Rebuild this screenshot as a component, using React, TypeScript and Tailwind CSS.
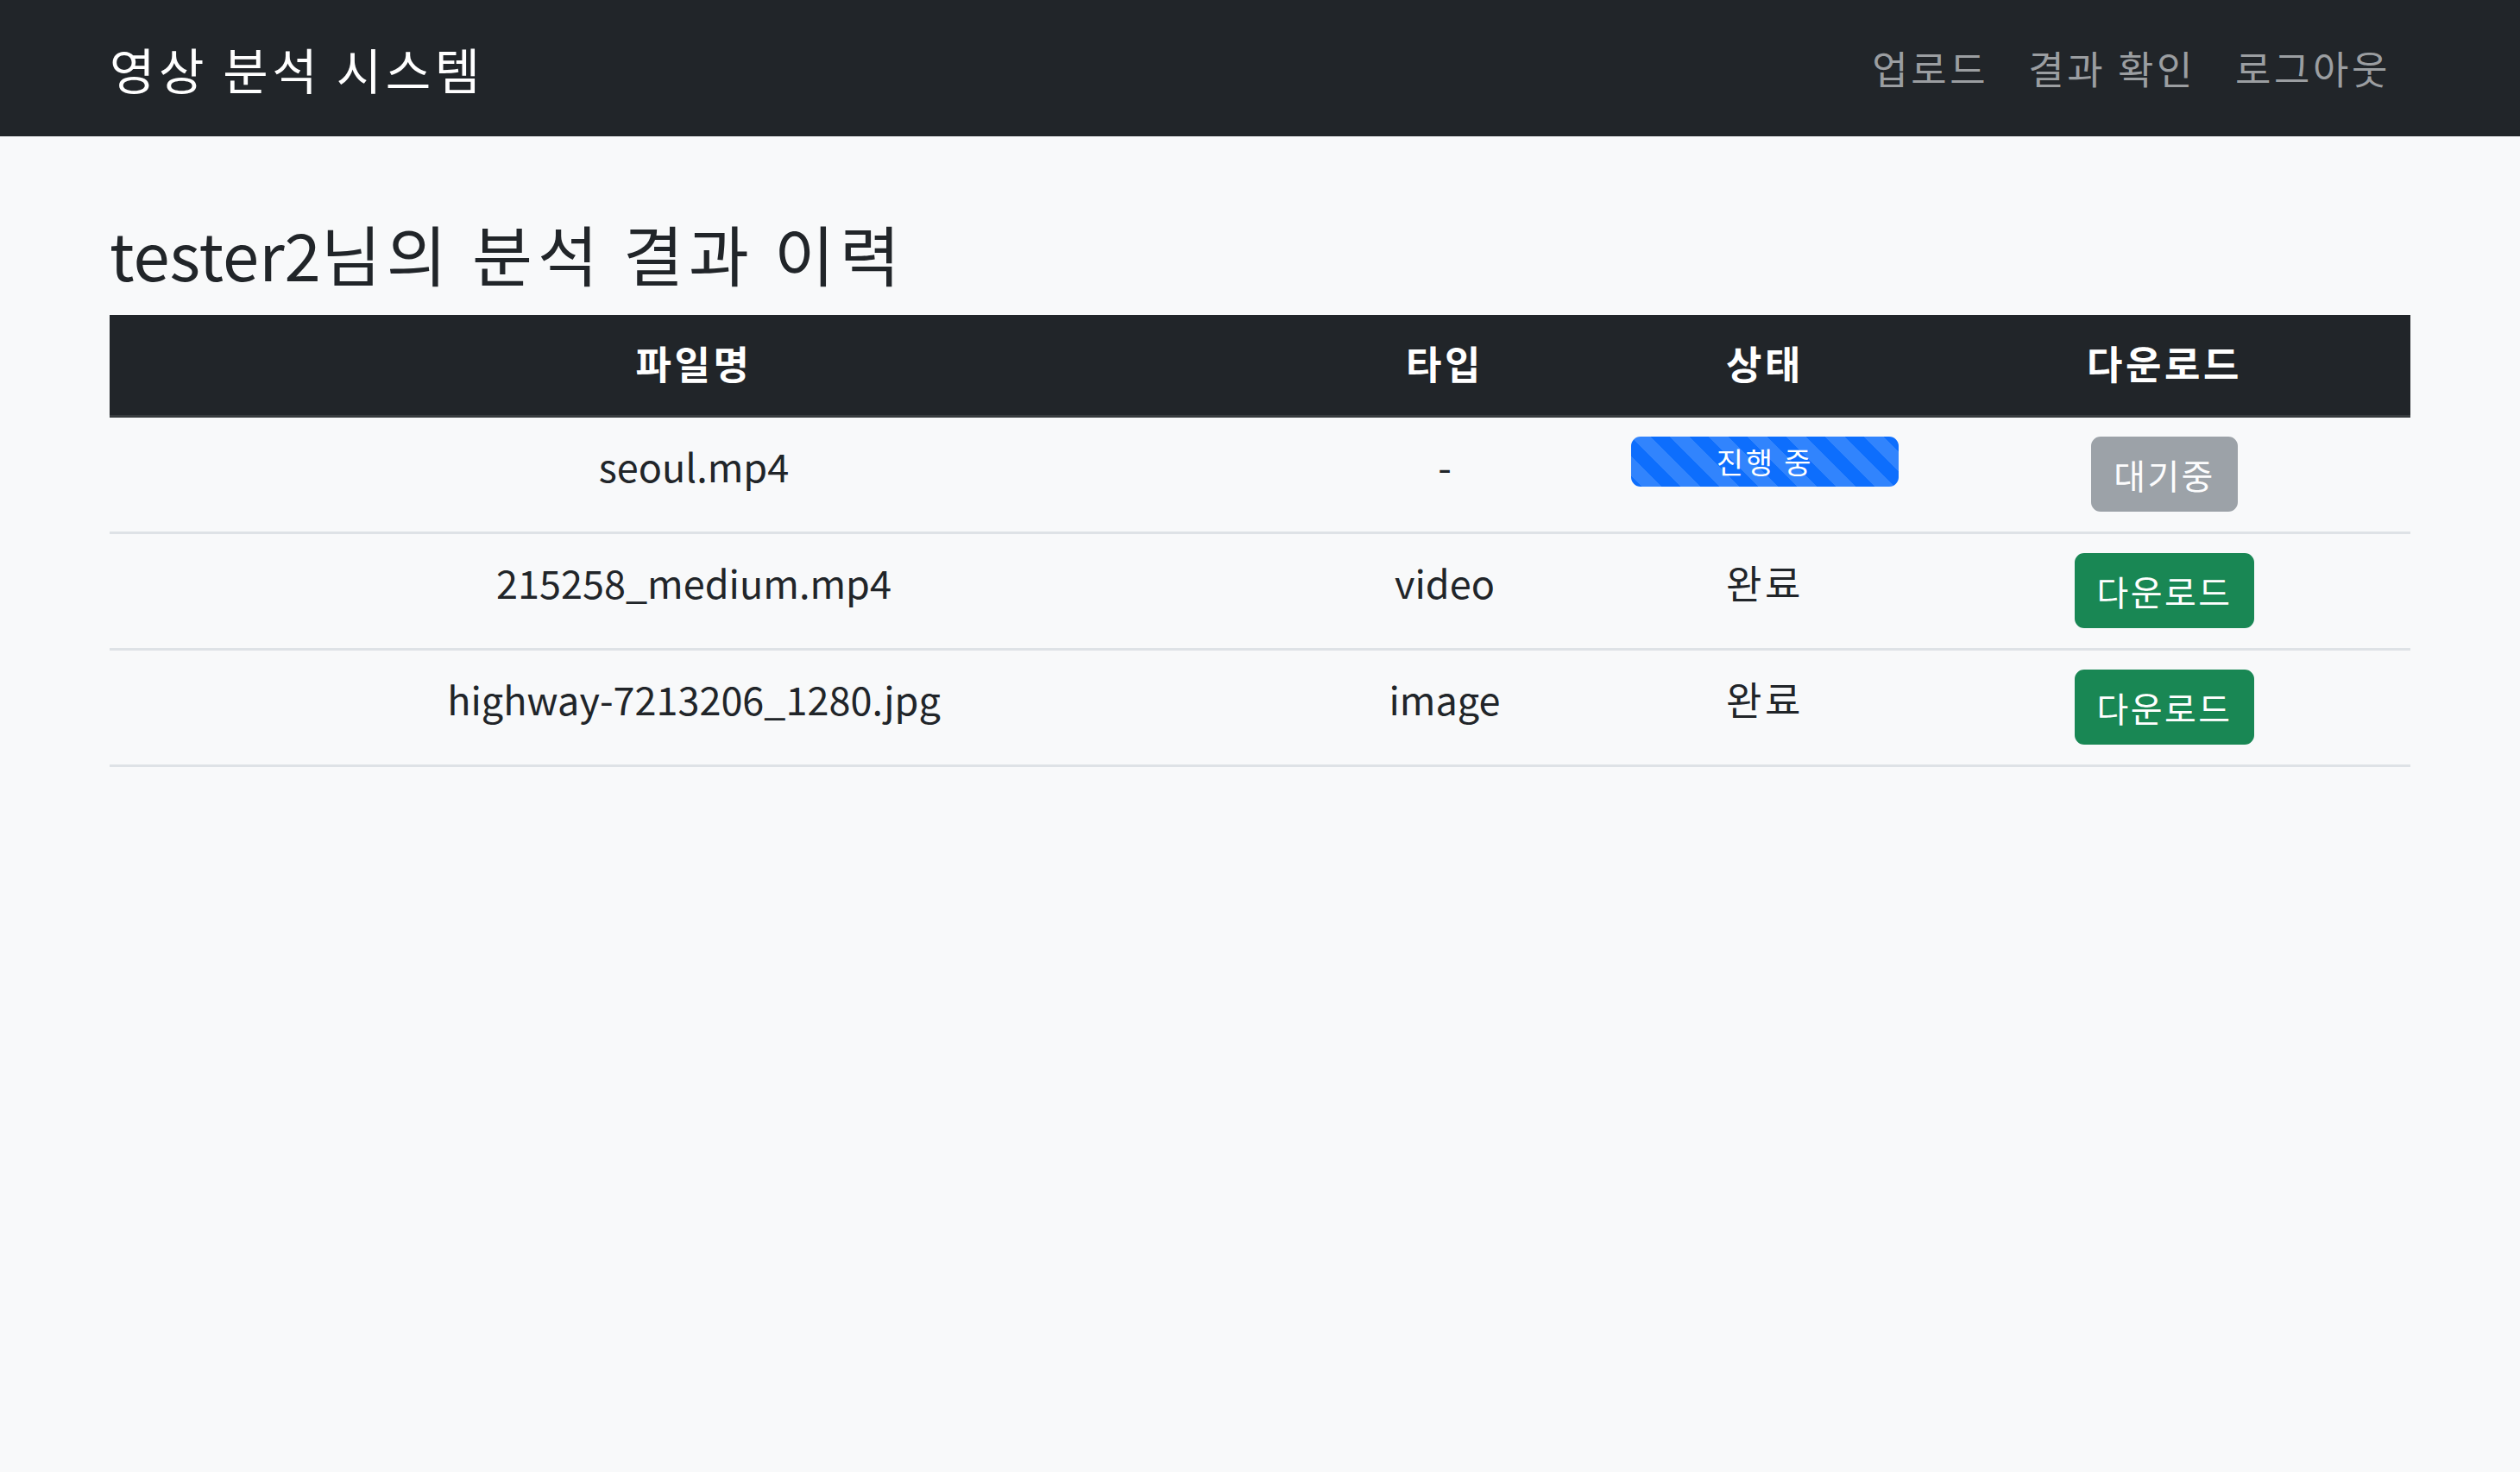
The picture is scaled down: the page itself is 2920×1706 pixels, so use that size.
import type { ReactNode } from "react";

type Row = {
  name: string;
  type: string;
  status: "running" | "done";
};

const rows: Row[] = [
  { name: "seoul.mp4", type: "-", status: "running" },
  { name: "215258_medium.mp4", type: "video", status: "done" },
  { name: "highway-7213206_1280.jpg", type: "image", status: "done" },
];

function NavLink({ children }: { children: ReactNode }) {
  return (
    <a href="#" className="px-[23px] text-[45px] leading-[68px] tracking-[0.08em] text-[#9b9ea1]">
      {children}
    </a>
  );
}

function Th({ children }: { children: ReactNode }) {
  return (
    <th className="border-b-[3px] border-[#373b3e] px-[23px] pt-[22px] pb-[26px] text-center text-[45px] font-bold leading-[68px] tracking-[0.08em] text-white">
      {children}
    </th>
  );
}

function Td({ children }: { children: ReactNode }) {
  return (
    <td className="border-b-[3px] border-[#dee2e6] px-[23px] pt-[22px] pb-[23px] text-center align-top text-[45px] leading-[68px] text-[#212529]">
      {children}
    </td>
  );
}

// 진행 중 상태 — bootstrap의 striped progress bar 흉내
function Progress() {
  return (
    <div className="h-[58px] w-full overflow-hidden rounded-[11px] bg-[#e9ecef]">
      <div className="flex h-full w-full items-center justify-center bg-[#0d6efd] bg-[linear-gradient(45deg,rgba(255,255,255,.15)_25%,transparent_25%,transparent_50%,rgba(255,255,255,.15)_50%,rgba(255,255,255,.15)_75%,transparent_75%,transparent)] bg-size-[45px_45px] text-[34px] leading-[58px] tracking-[0.08em] text-white">
        진행 중
      </div>
    </div>
  );
}

export default function App() {
  return (
    <div className="min-h-screen bg-[#f8f9fa] font-['Noto_Sans_CJK_KR','Noto_Sans',sans-serif] text-[#212529]">
      <nav className="flex h-[158px] items-center bg-[#212529]">
        <div className="mx-auto flex w-[2666px] items-center justify-between">
          <a href="#" className="text-[57px] leading-[85px] tracking-[0.08em] text-white">
            영상 분석 시스템
          </a>
          <div className="flex items-center">
            <NavLink>업로드</NavLink>
            <NavLink>결과 확인</NavLink>
            <NavLink>로그아웃</NavLink>
          </div>
        </div>
      </nav>

      <main className="mx-auto w-[2666px] pt-[89px]">
        <h3 className="mb-[26px] text-[76px] leading-[92px] font-normal">
          tester2<span className="tracking-[0.08em]">님의 분석 결과 이력</span>
        </h3>
        <table className="w-full table-fixed border-collapse">
          <colgroup>
            <col className="w-[1354px]" />
            <col className="w-[386px]" />
            <col className="w-[356px]" />
            <col className="w-[570px]" />
          </colgroup>
          <thead className="bg-[#212529]">
            <tr>
              <Th>파일명</Th>
              <Th>타입</Th>
              <Th>상태</Th>
              <Th>다운로드</Th>
            </tr>
          </thead>
          <tbody>
            {rows.map((r) => (
              <tr key={r.name}>
                <Td>{r.name}</Td>
                <Td>{r.type}</Td>
                <Td>
                  {r.status === "running" ? (
                    <Progress />
                  ) : (
                    <span className="tracking-[0.08em]">완료</span>
                  )}
                </Td>
                <Td>
                  {r.status === "running" ? (
                    <button
                      type="button"
                      disabled
                      className="h-[87px] rounded-[11px] border-[3px] border-[#6c757d] bg-[#6c757d] px-[23px] align-top text-[40px] leading-[60px] tracking-[0.06em] text-white opacity-65"
                    >
                      대기중
                    </button>
                  ) : (
                    <a
                      href="#"
                      className="inline-flex h-[87px] items-center rounded-[11px] border-[3px] border-[#198754] bg-[#198754] px-[23px] align-top text-[40px] leading-[60px] tracking-[0.06em] text-white"
                    >
                      다운로드
                    </a>
                  )}
                </Td>
              </tr>
            ))}
          </tbody>
        </table>
      </main>
    </div>
  );
}
